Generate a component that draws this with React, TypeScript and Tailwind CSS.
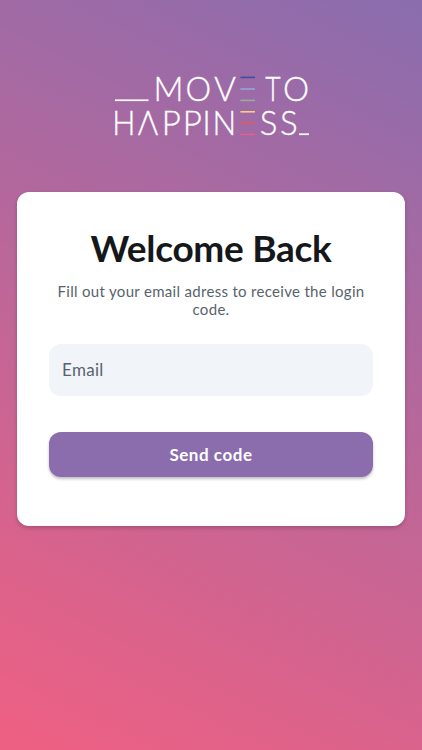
import { useState } from "react";

// each letter is centred on x; sx widens or narrows it to the wordmark's proportions
const letters = [
  { char: "M", x: 168.6, y: 101.3, sx: 1 },
  { char: "O", x: 198.2, y: 101.3, sx: 0.98 },
  { char: "V", x: 225, y: 101.3, sx: 1 },
  { char: "T", x: 273, y: 101.3, sx: 0.8 },
  { char: "O", x: 296, y: 101.3, sx: 1 },
  { char: "H", x: 123.8, y: 134.8, sx: 0.93 },
  { char: "P", x: 171.3, y: 134.8, sx: 1 },
  { char: "P", x: 192.4, y: 134.8, sx: 1 },
  { char: "I", x: 206.5, y: 134.8, sx: 1 },
  { char: "N", x: 224.3, y: 134.8, sx: 0.95 },
  { char: "S", x: 268.7, y: 134.8, sx: 1 },
  { char: "S", x: 288.8, y: 134.8, sx: 1 },
];

const bars = [
  { y: 76.6, color: "#3d4fa5" },
  { y: 88.2, color: "#8fa9d3" },
  { y: 99.6, color: "#96ad9f" },
  { y: 111, color: "#f6cf7b" },
  { y: 122.1, color: "#e15a66" },
  { y: 133.6, color: "#e2628f" },
];

function Logo() {
  return (
    <svg
      viewBox="110 60 204 92"
      className="ml-0.5 h-[92px] w-[204px] font-['Lato',sans-serif] text-[33px] font-light"
      fill="white"
      role="img"
      aria-label="Move to happiness"
    >
      <rect x="115" y="99.4" width="33.5" height="1.7" />
      <g stroke="white" strokeWidth="0.35">
        {letters.map((l, i) => (
          <text key={i} textAnchor="middle" transform={`translate(${l.x} ${l.y}) scale(${l.sx} 1)`}>
            {l.char}
          </text>
        ))}
        <text textAnchor="middle" transform="translate(148 111) rotate(180) scale(0.95 1)">
          V
        </text>
      </g>
      {bars.map((b) => (
        <rect key={b.y} x="240.4" y={b.y} width="14.6" height="1.6" fill={b.color} />
      ))}
      <rect x="299" y="133.4" width="10" height="1.7" />
    </svg>
  );
}

export default function App() {
  const [email, setEmail] = useState("");

  return (
    <div className="flex min-h-screen flex-col items-center bg-[linear-gradient(206.1deg,#8b6dae_1.4%,#ee6083_98.6%)] px-4 pt-[60px] font-['Lato',sans-serif]">
      <Logo />

      <div className="mt-10 h-[333.5px] w-full max-w-[388px] rounded-xl bg-white px-8 pt-8 shadow-[0_2px_4px_rgba(0,0,0,0.2)]">
        <h1 className="text-center text-[37px] leading-[48px] font-bold tracking-[-0.3px] whitespace-nowrap text-[#14181b]">
          Welcome Back
        </h1>
        <p className="mt-2.5 text-center text-[15px] leading-[18px] tracking-[0.31px] text-[#57636c]">
          Fill out your email adress to receive the login code.
        </p>

        <form onSubmit={(e) => e.preventDefault()}>
          <input
            type="email"
            value={email}
            onChange={(e) => setEmail(e.target.value)}
            placeholder="Email"
            className="mt-[26px] block h-[52px] w-full rounded-xl bg-[#f1f4f8] pr-3 pb-px pl-[13px] text-[17px] tracking-[0.3px] text-[#14181b] outline-none placeholder:text-[#57636c]"
          />
          <button
            type="submit"
            className="mt-9 block h-[45px] w-full rounded-xl bg-[#8b6dae] pt-px text-[17px] font-bold tracking-[0.55px] text-white shadow-[0_2px_3px_rgba(0,0,0,0.25)]"
          >
            Send code
          </button>
        </form>
      </div>
    </div>
  );
}
